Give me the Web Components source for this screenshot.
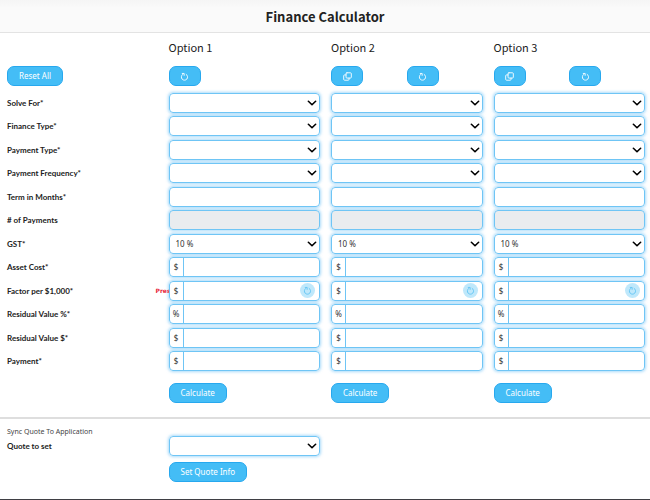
<!DOCTYPE html>
<html lang="en">
<head>
<meta charset="utf-8">
<meta name="viewport" content="width=device-width, initial-scale=1">
<title>Finance Calculator</title>
<style>
  html, body{ margin:0; }
  body{ font-family:"Open Sans","Noto Sans",sans-serif; color:#222; background:#fff;
    --blue:#44bdf6; --blue-d:#27a8ee; --line:#6fc5f5; --glow:rgba(100,190,245,.55);
    --head:"Noto Sans CJK SC","Noto Sans",sans-serif; }
</style>
</head>
<body>
<finance-calculator></finance-calculator>

<script>
(function(){
  var ICONS = {
    refresh:'<path d="M11 4.2A5.6 5.6 0 1 1 4.6 4.4"/><path d="M4 2.6h3.4V6"/>',
    copy:'<rect x="5.4" y="1.4" width="9.4" height="9.4" rx="1.6"/><path d="M5.4 5.2H2.8a1.6 1.6 0 0 0-1.6 1.6v6.2a1.6 1.6 0 0 0 1.6 1.6h6.4a1.6 1.6 0 0 0 1.6-1.6v-2.2"/>',
    chevron:'<path d="M2.2 5.2 8 10.8l5.8-5.6"/>'
  };

  // type: select | text | locked | unit
  var ROWS = [
    { label:'Solve For*',         type:'select' },
    { label:'Finance Type*',      type:'select' },
    { label:'Payment Type*',      type:'select' },
    { label:'Payment Frequency*', type:'select' },
    { label:'Term in Months*',    type:'text' },
    { label:'# of Payments',      type:'locked' },
    { label:'GST*',               type:'select', value:'10 %' },
    { label:'Asset Cost*',        type:'unit', unit:'$' },
    { label:'Factor per $1,000*', type:'unit', unit:'$', refresh:true, hint:'Pres' },
    { label:'Residual Value %*',  type:'unit', unit:'%' },
    { label:'Residual Value $*',  type:'unit', unit:'$' },
    { label:'Payment*',           type:'unit', unit:'$' }
  ];

  function define(name, render){
    customElements.define(name, class extends HTMLElement{
      connectedCallback(){
        if(this.shadowRoot) return;
        this.attachShadow({mode:'open'}).innerHTML = render(this);
      }
    });
  }

  define('calc-icon', function(el){
    return '<style>:host{ display:block; width:var(--icon,9px); height:var(--icon,9px); }'+
      'svg{ display:block; width:100%; height:100%; fill:none; stroke:currentColor; stroke-width:var(--stroke,1.6); stroke-linecap:round; stroke-linejoin:round; }</style>'+
      '<svg viewBox="0 0 16 16" aria-hidden="true">'+ICONS[el.getAttribute('name')]+'</svg>';
  });

  define('calc-button', function(el){
    var aria = el.getAttribute('label');
    return `<style>
      :host{ display:block; }
      button{ display:flex; align-items:center; justify-content:center; min-width:32px; height:20px; padding:0 11px;
        border:1px solid var(--blue-d); border-radius:7px; background:var(--blue); color:#fff;
        font:8px/10px "Noto Sans","Open Sans",sans-serif; white-space:nowrap; cursor:pointer; }
      :host([label]) button{ padding:0; }
      button:hover{ background:var(--blue-d); }
    </style>
    <button type="button"${aria ? ' aria-label="'+aria+'"' : ''}><slot></slot></button>`;
  });

  // Four equal columns, the label's one first
  define('calc-grid', function(){
    return `<style>
      :host{ display:grid; grid-template-columns:repeat(4,minmax(0,1fr)); align-items:center; }
      ::slotted(*){ margin:0 5px 0 6px; }
      ::slotted(:first-child){ margin-left:7px; }
    </style><slot></slot>`;
  });

  function control(row, n){
    var id = 'f'+n;
    var name = n===1 ? '' : ' aria-label="'+row.label+' option '+n+'"';
    if(row.type==='select'){
      return '<div class="field"><select id="'+id+'"'+name+'><option>'+(row.value||'')+'</option></select>'+
        '<calc-icon class="chev" name="chevron"></calc-icon></div>';
    }
    var hint = row.hint && n===1 ? '<span class="hint">'+row.hint+'</span>' : '';
    return hint+'<div class="field'+(row.type==='locked' ? ' locked' : '')+'">'+
      (row.unit ? '<span class="unit">'+row.unit+'</span>' : '')+
      '<input id="'+id+'" type="text"'+name+(row.type==='locked' ? ' disabled' : '')+'>'+
      (row.refresh ? '<button class="round" type="button" aria-label="Refresh factor '+n+'"><calc-icon name="refresh"></calc-icon></button>' : '')+
      '</div>';
  }

  define('calc-row', function(el){
    var row = el.hasAttribute('row') ? ROWS[+el.getAttribute('row')] : { label:el.getAttribute('label'), type:'select' };
    var count = +(el.getAttribute('count') || 3), cells = '';
    for(var n=1; n<=count; n++) cells += '<div class="cell">'+control(row, n)+'</div>';
    return `<style>
      :host{ display:block; }
      label{ font:700 8px/12px Lato,"Open Sans",sans-serif; white-space:nowrap; }
      .cell{ position:relative; }
      .field{ position:relative; display:flex; align-items:stretch; height:20px; box-sizing:border-box; overflow:hidden;
        border:1px solid var(--line); border-radius:4px; background:#fff; }
      .cell::before{ content:""; position:absolute; inset:0; border-radius:4px; box-shadow:0 0 3px 1px var(--glow); }
      select, input{ flex:1; min-width:0; width:100%; border:0; outline:0; margin:0; padding:0 6px; background:none;
        appearance:none; border-radius:0; color:#333; font:8px/18px "Noto Sans","Open Sans",sans-serif; }
      .locked{ background:#e9ecef; }
      .unit{ flex:none; width:13px; border-right:1px solid var(--line); color:#333; text-align:center;
        font:8px/18px "Noto Sans","Open Sans",sans-serif; }
      .chev{ --icon:10px; --stroke:2.6; position:absolute; right:2px; top:4px; color:#000; pointer-events:none; }
      .round{ --stroke:1.5; flex:none; align-self:center; display:flex; align-items:center; justify-content:center;
        width:15px; height:15px; margin-right:4px; padding:0; border:0; border-radius:50%; background:#bfe8fb; color:#5cc3f3; }
      .hint{ position:absolute; right:calc(100% - 2px); top:5px; color:#e8273b; font:700 6px/10px "DejaVu Sans",sans-serif; }
    </style>
    <calc-grid><label for="f1">${row.label}</label>${cells}</calc-grid>`;
  });

  define('finance-calculator', function(){
    var refresh = '<calc-icon name="refresh"></calc-icon>', copy = '<calc-icon name="copy"></calc-icon>';
    function tools(n){
      return '<div class="tools">'+(n>1 ? '<calc-button label="Copy option '+n+'">'+copy+'</calc-button>' : '')+
        '<calc-button label="Reset option '+n+'">'+refresh+'</calc-button></div>';
    }
    return `<style>
      :host{ display:flex; flex-direction:column; min-height:100vh; box-sizing:border-box; border-bottom:1px solid #3f3f44; }
      header{ padding:7px 0 5px; border-bottom:1px solid #e3e3e3; background:linear-gradient(#f5f5f5,#fafafa 8px); }
      h1{ margin:0; text-align:center; font:700 13px/20px var(--head); }
      h2{ font:400 11px/16px var(--head); }
      .titles{ padding-top:6px; }
      .actions{ padding:11px 0 5px; }
      .tools{ display:grid; grid-template-columns:1fr 1fr; justify-items:start; }
      .rows{ display:grid; grid-auto-rows:1fr; align-items:center; min-height:282px; }
      .calc{ padding:10px 0 14px; justify-items:start; }
      .sync{ border-top:2px solid #dedede; padding-top:9px; }
      .sync p{ margin:0 7px; font:7px/8px "Noto Sans","Open Sans",sans-serif; color:#444; }
      .send{ padding-top:6px; justify-items:start; }
    </style>
    <header><h1>Finance Calculator</h1></header>
    <main>
      <calc-grid class="titles"><span></span><h2>Option 1</h2><h2>Option 2</h2><h2>Option 3</h2></calc-grid>
      <calc-grid class="actions"><calc-button>Reset All</calc-button>${tools(1)}${tools(2)}${tools(3)}</calc-grid>
      <div class="rows">${ROWS.map(function(r, i){ return '<calc-row row="'+i+'"></calc-row>'; }).join('')}</div>
      <calc-grid class="calc"><span></span><calc-button>Calculate</calc-button><calc-button>Calculate</calc-button><calc-button>Calculate</calc-button></calc-grid>
      <section class="sync">
        <p>Sync Quote To Application</p>
        <calc-row label="Quote to set" count="1"></calc-row>
        <calc-grid class="send"><span></span><calc-button>Set Quote Info</calc-button></calc-grid>
      </section>
    </main>`;
  });
})();
</script>
</body>
</html>
